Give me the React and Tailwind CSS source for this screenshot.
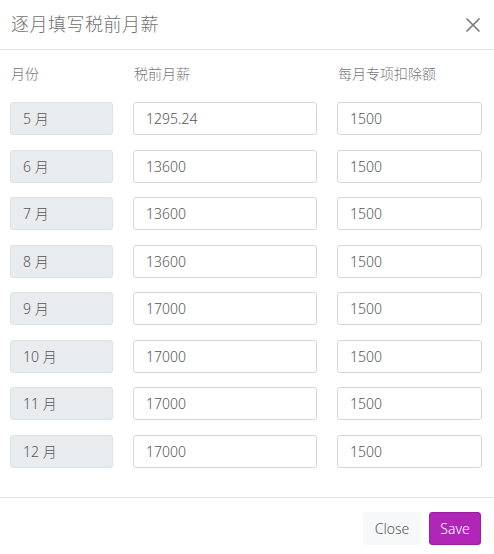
import React from "react";

const rows = [
  ["5 月", "1295.24", "1500"],
  ["6 月", "13600", "1500"],
  ["7 月", "13600", "1500"],
  ["8 月", "13600", "1500"],
  ["9 月", "17000", "1500"],
  ["10 月", "17000", "1500"],
  ["11 月", "17000", "1500"],
  ["12 月", "17000", "1500"],
];

export default function App() {
  return (
    <div className="w-[494px] h-[554px] bg-white flex flex-col font-['Noto_Sans','Noto_Sans_CJK_SC',sans-serif] font-light">
      <div className="h-[50px] flex items-center justify-between pl-[11px] pr-[13px] border-b border-[#e3e3e8]">
        <span className="text-[18px] text-[#707070] tracking-[0.5px]">逐月填写税前月薪</span>
        <svg width="16" height="16" viewBox="0 0 16 16" className="text-[#7a7a7a]">
          <path d="M1.5 1.5 L14.5 14.5 M14.5 1.5 L1.5 14.5" stroke="currentColor" strokeWidth="1.6" />
        </svg>
      </div>
      <div className="flex-1 pl-[10px] pt-[13px]">
        <div className="grid grid-cols-[103px_184px_145px] gap-x-[20px] text-[14px] text-[#777]">
          <div className="pl-[1px] h-[22px] leading-[22px]">月份</div>
          <div className="pl-[1px] h-[22px] leading-[22px]">税前月薪</div>
          <div className="pl-[1px] h-[22px] leading-[22px]">每月专项扣除额</div>
        </div>
        <div className="mt-[17px] flex flex-col gap-[14.5px]">
          {rows.map((r, i) => (
            <div key={i} className="grid grid-cols-[103px_184px_145px] gap-x-[20px] text-[14px] text-[#555]">
              <div className="h-[33px] flex items-center pl-[12px] bg-[#e9ecef] border border-[#dde0e4] rounded-[3px]">{r[0]}</div>
              <div className="h-[33px] flex items-center pl-[12px] bg-white border border-[#d4d7dc] rounded-[3px]">{r[1]}</div>
              <div className="h-[33px] flex items-center pl-[12px] bg-white border border-[#d4d7dc] rounded-[3px]">{r[2]}</div>
            </div>
          ))}
        </div>
      </div>
      <div className="h-[57px] border-t border-[#e3e3e8] flex justify-end items-start pt-[14px] pr-[13px] gap-[8px]">
        <button className="h-[33px] w-[58px] rounded-[3px] bg-[#f7f8fa] text-[#555] text-[14px]">Close</button>
        <button className="h-[33px] w-[52px] rounded-[3px] bg-[#b026b6] border border-[#9a1fa0] text-white text-[14px]">Save</button>
      </div>
    </div>
  );
}
